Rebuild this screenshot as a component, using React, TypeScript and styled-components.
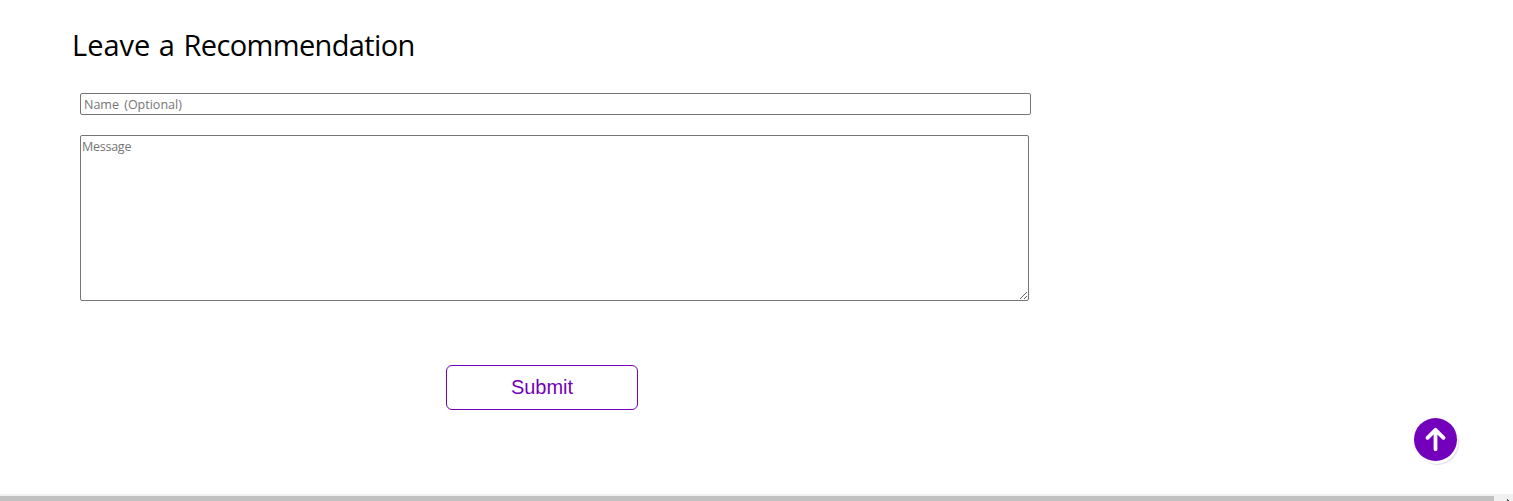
import React from "react";
import styled, { createGlobalStyle } from "styled-components";

const GlobalStyle = createGlobalStyle`
  *, *::before, *::after { box-sizing: border-box; }
  html, body { margin: 0; padding: 0; background: #fff; }
  body { overflow: hidden; }
`;

const textFont = `"Trebuchet MS", "Open Sans", "Noto Sans", sans-serif`;

const Page = styled.div`
  display: flex;
  flex-direction: column;
  height: 501px;
`;

const Section = styled.main`
  flex: 1;
  padding: 24px 0 0 72px;
`;

const Title = styled.h1`
  margin: 0;
  height: 42px;
  font: 400 29px/42px ${textFont};
  word-spacing: 1px;
  color: #000;
  white-space: nowrap;
`;

const LongWord = styled.span`
  letter-spacing: -0.63px;
`;

const Form = styled.form`
  display: flex;
  flex-direction: column;
  align-items: flex-start;
  padding: 27px 0 0 8px;
`;

const NameInput = styled.input`
  width: 951px;
  height: 22px;
  margin: 0 0 20px;
  padding: 1px 2px 1px 3px;
  border: 1px solid #767676;
  border-radius: 2px;
  background: #fff;
  font: 400 12.5px/18px ${textFont};
  word-spacing: 2px;
  outline: none;
  &::placeholder { color: #757575; }
`;

const MessageInput = styled.textarea`
  display: block;
  width: 949px;
  height: 166px;
  margin: 0 0 64px;
  padding: 2px 2px 2px 1px;
  border: 1px solid #767676;
  border-radius: 2px;
  background: #fff;
  font: 400 12.5px/18px ${textFont};
  letter-spacing: -0.25px;
  outline: none;
  resize: both;
  &::placeholder { color: #757575; }
`;

const SubmitButton = styled.button`
  width: 192px;
  height: 45px;
  margin-left: 366px;
  padding: 0;
  border: 1px solid #7300bb;
  border-radius: 6px;
  background: #fff;
  color: #7300bb;
  font: 400 20px/43px "Liberation Sans", Arial, sans-serif;
`;

const TopButton = styled.button`
  position: fixed;
  left: 1414px;
  top: 418px;
  width: 43px;
  height: 43px;
  padding: 0;
  border: 0;
  border-radius: 50%;
  background: #7300bb;
  box-shadow: 1px 3px 0 0 #fff, 2px 4px 0 0 #e9ddf0;
  svg { display: block; }
`;

const ScrollTrack = styled.div`
  display: flex;
  align-items: flex-end;
  justify-content: space-between;
  height: 7px;
  background: #f1f1f1;
`;

const ScrollThumb = styled.div`
  width: 1494px;
  height: 5px;
  background: #c1c1c1;
`;

const ScrollArrow = styled.svg`
  display: block;
  width: 7px;
  height: 2px;
  margin-right: 1px;
`;

export default function App() {
  return (
    <Page>
      <GlobalStyle />
      <Section>
        <Title>Leave a <LongWord>Recommendation</LongWord></Title>
        <Form onSubmit={(event) => event.preventDefault()}>
          <NameInput type="text" placeholder="Name (Optional)" />
          <MessageInput placeholder="Message" />
          <SubmitButton type="submit">Submit</SubmitButton>
        </Form>
      </Section>
      <TopButton aria-label="Back to top">
        <svg width="43" height="43" viewBox="0 0 43 43" fill="none" stroke="#fff" strokeWidth="3.8" strokeLinecap="round" strokeLinejoin="round">
          <path d="M21.5 31.2V12M13.5 19.8l8-8 8 8" />
        </svg>
      </TopButton>
      <ScrollTrack>
        <ScrollThumb />
        <ScrollArrow viewBox="0 0 7 2" shapeRendering="crispEdges">
          <path d="M2 0h1v1h1v1H2z" fill="#505050" />
        </ScrollArrow>
      </ScrollTrack>
    </Page>
  );
}
